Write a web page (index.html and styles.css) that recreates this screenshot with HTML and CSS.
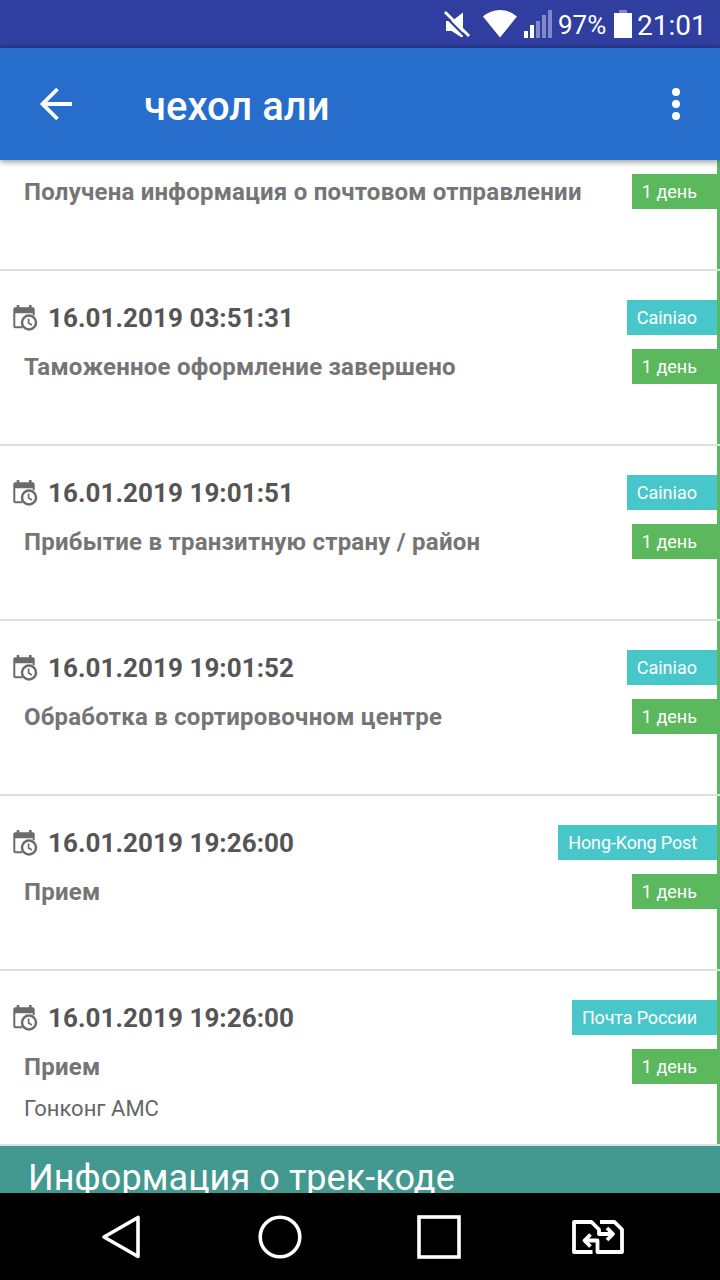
FILE: index.html
```html
<!DOCTYPE html>
<html lang="ru">

<head>
    <meta charset="UTF-8">
    <meta name="viewport" content="width=device-width, initial-scale=1.0">
    <title>чехол али</title>
    <link rel="stylesheet" href="styles.css">
</head>

<body>
    <!-- calendar icon shared by all events -->
    <svg class="sprite" aria-hidden="true">
        <symbol id="calendar" viewBox="0 0 26 28">
            <path fill="#6b6b6b" d="M1.3 5.3a2 2 0 0 1 2-2h1.4V1h2.6v2.3H17V1h2.6v2.3h1.1a2 2 0 0 1 2 2v6h-2V9.300H3.300v13h7v2h-7a2 2 0 0 1-2-2z"/>
            <circle cx="17" cy="18.500" r="7" fill="#fff" stroke="#6b6b6b" stroke-width="2.500"/>
            <path d="M16.600 14.600v4.400l3.300 2" fill="none" stroke="#6b6b6b" stroke-width="1.700"/>
        </symbol>
    </svg>

    <div class="screen">
        <div class="status-bar">
            <svg class="mute-icon" width="28" height="28" viewBox="0 0 28 28">
                <path fill="#fff" d="M3 11h6L20 2.500V27h-2L8.500 21H3z"/>
                <path stroke="#303f9f" stroke-width="2.200" d="M0 4.200l24 24"/>
                <path stroke="#fff" stroke-width="2.800" d="M2 2l24 24"/>
            </svg>
            <svg class="wifi-icon" width="34" height="28" viewBox="0 0 34 28">
                <path fill="#fff" d="M0 6.500Q7.500 0 17 0t17 6.500L17 27.500z"/>
            </svg>
            <svg class="signal-icon" width="28" height="28" viewBox="0 0 28 28">
                <path fill="#fff" d="M0 21h4v7H0zM6 15h4v13H6z"/>
                <path fill="#8389c8" d="M12 11h4v17h-4zM18 5h4v23h-4zM24 0h4v28h-4z"/>
            </svg>
            <span class="battery-level">97%</span>
            <svg class="battery-icon" width="18" height="28" viewBox="0 0 18 28">
                <path fill="#8389c8" d="M5 0h8v3H5z"/>
                <path fill="#fff" d="M0 3h18v25H0z"/>
            </svg>
            <span class="clock">21:01</span>
        </div>

        <header class="app-bar">
            <svg class="back-icon" width="34" height="34" viewBox="0 0 34 34">
                <path d="M18.500 2L3.500 17l15 15M3.500 17H33" fill="none" stroke="#fff" stroke-width="3.800"/>
            </svg>
            <h1>чехол али</h1>
            <svg class="menu-icon" width="8" height="32" viewBox="0 0 8 32">
                <g fill="#fff">
                    <circle cx="4" cy="4" r="4"/>
                    <circle cx="4" cy="16" r="4"/>
                    <circle cx="4" cy="28" r="4"/>
                </g>
            </svg>
        </header>

        <main class="events">
            <div class="event event-cut">
                <div class="event-body">
                    <div class="line">
                        <span class="status">Получена информация о почтовом отправлении</span>
                        <span class="tag days">1 день</span>
                    </div>
                </div>
            </div>
            <div class="event">
                <div class="event-body">
                    <div class="line">
                        <svg class="calendar-icon"><use href="#calendar"/></svg>
                        <span class="date">16.01.2019 03:51:31</span>
                        <span class="tag service">Cainiao</span>
                    </div>
                    <div class="line">
                        <span class="status">Таможенное оформление завершено</span>
                        <span class="tag days">1 день</span>
                    </div>
                </div>
            </div>
            <div class="event">
                <div class="event-body">
                    <div class="line">
                        <svg class="calendar-icon"><use href="#calendar"/></svg>
                        <span class="date">16.01.2019 19:01:51</span>
                        <span class="tag service">Cainiao</span>
                    </div>
                    <div class="line">
                        <span class="status">Прибытие в транзитную страну / район</span>
                        <span class="tag days">1 день</span>
                    </div>
                </div>
            </div>
            <div class="event">
                <div class="event-body">
                    <div class="line">
                        <svg class="calendar-icon"><use href="#calendar"/></svg>
                        <span class="date">16.01.2019 19:01:52</span>
                        <span class="tag service">Cainiao</span>
                    </div>
                    <div class="line">
                        <span class="status">Обработка в сортировочном центре</span>
                        <span class="tag days">1 день</span>
                    </div>
                </div>
            </div>
            <div class="event">
                <div class="event-body">
                    <div class="line">
                        <svg class="calendar-icon"><use href="#calendar"/></svg>
                        <span class="date">16.01.2019 19:26:00</span>
                        <span class="tag service long">Hong-Kong Post</span>
                    </div>
                    <div class="line">
                        <span class="status">Прием</span>
                        <span class="tag days">1 день</span>
                    </div>
                </div>
            </div>
            <div class="event">
                <div class="event-body">
                    <div class="line">
                        <svg class="calendar-icon"><use href="#calendar"/></svg>
                        <span class="date">16.01.2019 19:26:00</span>
                        <span class="tag service long">Почта России</span>
                    </div>
                    <div class="line">
                        <span class="status">Прием</span>
                        <span class="tag days">1 день</span>
                    </div>
                    <p class="place">Гонконг АМС</p>
                </div>
            </div>
        </main>

        <div class="info-title">Информация о трек-коде</div>

        <nav class="nav-bar">
            <svg class="nav-back" width="40" height="46" viewBox="0 0 40 46">
                <path d="M37 3.500v39L3 23z" fill="none" stroke="#fff" stroke-width="3.600" stroke-linejoin="round"/>
            </svg>
            <svg class="nav-home" width="44" height="44" viewBox="0 0 44 44">
                <circle cx="22" cy="22" r="19.800" fill="none" stroke="#fff" stroke-width="3.600"/>
            </svg>
            <svg class="nav-recent" width="44" height="44" viewBox="0 0 44 44">
                <rect x="2" y="2" width="40" height="40" fill="none" stroke="#fff" stroke-width="3.600"/>
            </svg>
            <svg class="nav-sim" width="54" height="36" viewBox="0 0 54 36">
                <g fill="none" stroke="#fff" stroke-width="3.800" stroke-linejoin="round">
                    <path d="M21.500 33H3V3h17.500l7.500 7.500V15h13M36 9l6 6-6 6"/>
                    <path d="M29 3h14.500l7.500 7.500V33H26.500V21.500H14M19.500 15.500l-6 6 6 6"/>
                </g>
            </svg>
        </nav>
    </div>
</body>

</html>
```
FILE: styles.css
```css
body {
    margin: 0;
    background-color: #fff;
    font-family: Roboto, sans-serif;
}

svg {
    flex-shrink: 0;
}

.sprite {
    display: none;
}

.screen {
    width: 720px;
    height: 1280px;
    display: flex;
    flex-direction: column;
    overflow: hidden;
}

/* status bar */
.status-bar {
    height: 48px;
    flex-shrink: 0;
    display: flex;
    align-items: center;
    justify-content: flex-end;
    box-sizing: border-box;
    padding-right: 14px;
    background: linear-gradient(#303f9f 43px, #2b398f 48px);
    color: #fff;
}

.wifi-icon {
    margin-left: 12px;
}

.signal-icon {
    margin: 0 6px 0 7px;
}

.battery-level {
    width: 56px;
    padding-top: 2px;
    font-size: 26px;
    line-height: 46px;
}

.clock {
    width: 69px;
    margin-left: 5px;
    padding-top: 3px;
    font-size: 28px;
    line-height: 45px;
}

/* app bar */
.app-bar {
    position: relative;
    height: 112px;
    flex-shrink: 0;
    display: flex;
    align-items: center;
    box-sizing: border-box;
    padding: 0 40px 0 39px;
    background-color: #276dcc;
    box-shadow: 0 2px 6px rgba(0, 0, 0, 0.4);
    color: #fff;
}

.app-bar h1 {
    flex: 1;
    margin: 6px 0 0 71px;
    font-size: 40px;
    font-weight: 500;
    line-height: 48px;
}

/* events */
.event {
    height: 175px;
    box-sizing: border-box;
    border-bottom: 2px solid #dfdfdf;
}

.event-body {
    height: 173px;
    box-sizing: border-box;
    padding: 29px 0 0 12px;
    border-right: 3px solid #5cb860;
}

.event-cut {
    height: 111px;
}

.event-cut .event-body {
    height: 109px;
    padding-top: 14px;
}

.line {
    height: 35px;
    display: flex;
    align-items: center;
    margin-bottom: 14px;
}

.calendar-icon {
    width: 26px;
    height: 28px;
}

.date {
    margin-left: 10px;
    color: #555;
    font-size: 26px;
    font-weight: bold;
    letter-spacing: 0.05px;
}

.status {
    margin-left: 12px;
    color: #757575;
    font-size: 24px;
    font-weight: bold;
    letter-spacing: 0.23px;
}

.tag {
    margin-left: auto;
    padding: 0 20px 0 10px;
    color: #fff;
    font-size: 18px;
    line-height: 35px;
}

.service {
    background-color: #48c7cb;
}

.long {
    letter-spacing: -0.14px;
}

.days {
    background-color: #5cb85c;
}

.place {
    margin: -3px 0 0 12px;
    color: #666;
    font-size: 22px;
    line-height: 28px;
}

/* track code info */
.info-title {
    height: 47px;
    flex-shrink: 0;
    box-sizing: border-box;
    padding: 8px 0 0 28px;
    overflow: hidden;
    background-color: #43998f;
    color: #fff;
    font-size: 36px;
    letter-spacing: 0.08px;
    line-height: 48px;
}

/* navigation bar */
.nav-bar {
    height: 87px;
    flex-shrink: 0;
    display: flex;
    align-items: center;
    box-sizing: border-box;
    padding: 0 0 0 101px;
    background-color: #000;
}

.nav-home {
    margin-left: 117px;
}

.nav-recent {
    margin-left: 115px;
}

.nav-sim {
    margin-left: 110px;
}
```
